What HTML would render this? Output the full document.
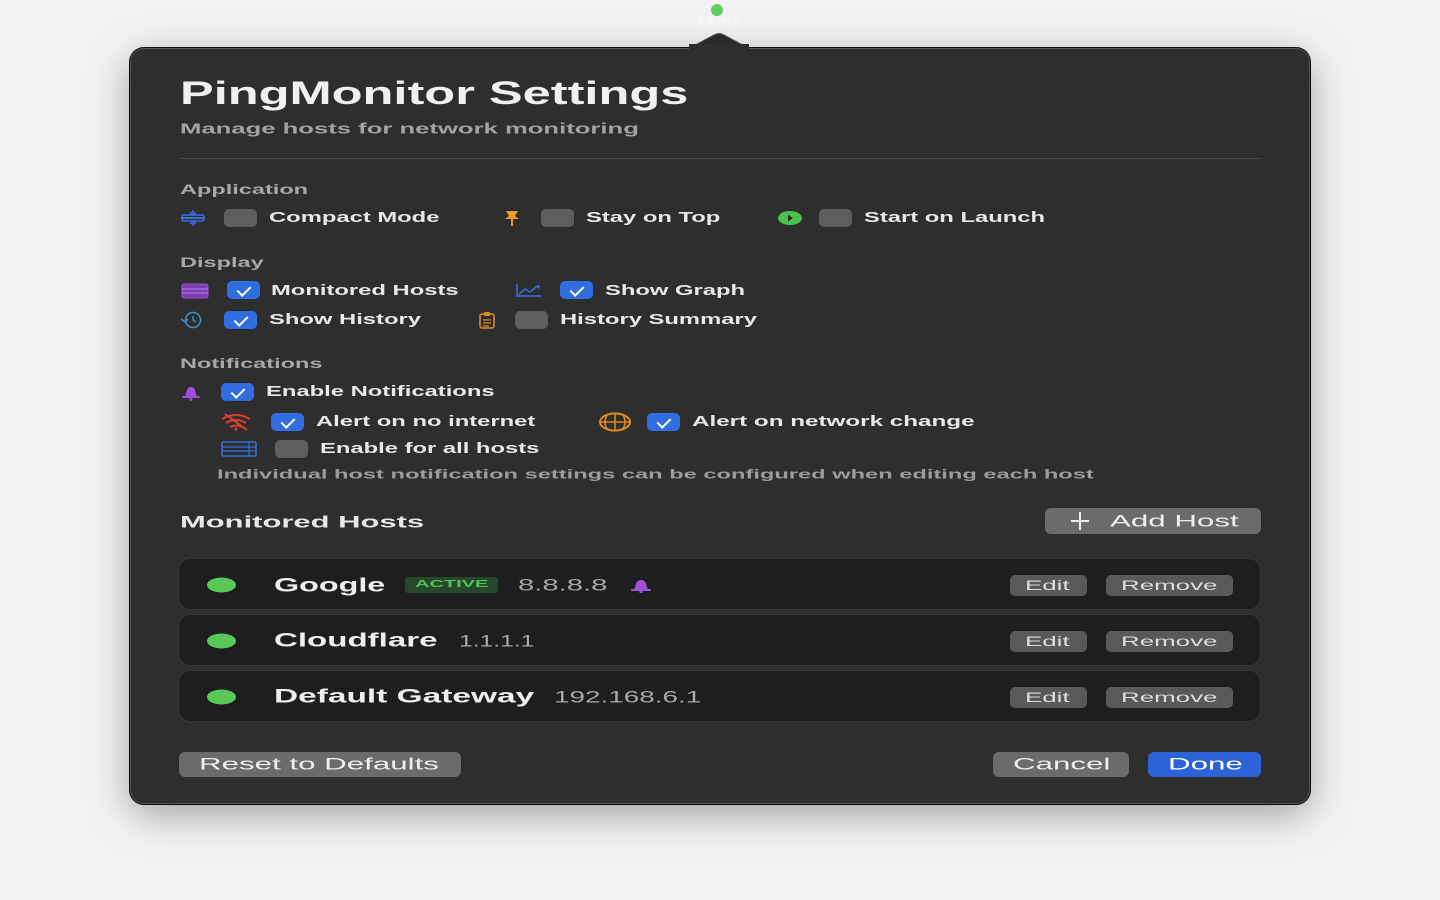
<!DOCTYPE html>
<html><head><meta charset="utf-8"><style>
*{margin:0;padding:0;box-sizing:border-box}
body{width:1440px;height:900px;background:#f3f3f5;position:relative;overflow:hidden;font-family:"Liberation Sans",sans-serif;}
.panel{position:absolute;left:130px;top:48px;width:1180px;height:756px;background:#2e2e2e;border-radius:14px;border:1px solid #555;box-shadow:0 10px 40px rgba(0,0,0,.35),0 0 0 1px #111;}
.t{position:absolute;white-space:nowrap;transform-origin:left center;font-weight:bold;line-height:1;transform:translateY(-50%) scaleX(1.5);}
.l{font-size:14.5px;color:#e8e8e8;transform:translateY(-50%) scaleX(1.64)}
.h{font-size:14px;color:#a8a8a8;transform:translateY(-50%) scaleX(1.68)}
.b{font-size:17px;font-weight:normal;transform:translateY(-50%) scaleX(1.84)}
.e{font-size:14px;color:#ddd;font-weight:normal;transform:translateY(-50%) scaleX(1.85)}
.cb{position:absolute;width:33px;height:18px;border-radius:5px;background:#5e5e5e;transform:translateY(-50%)}
.cb.on{background:#2f6de0}
.cb.on::after{content:"";position:absolute;left:13px;top:2px;width:6px;height:11px;border:solid #fff;border-width:0 2.5px 2.5px 0;transform:rotate(45deg)}
.ic{position:absolute;transform:translate(-50%,-50%)}
.row{position:absolute;left:178px;width:1083px;height:52px;background:#1e1e1e;border-radius:12px;border:1px solid #363636}
.dot{position:absolute;left:207px;width:29px;height:15px;border-radius:50%;background:#57c957;transform:translateY(-50%)}
.btn{position:absolute;border-radius:5px;background:#595959}
</style></head><body>
<div style="position:absolute;left:711px;top:4px;width:12px;height:12px;border-radius:50%;background:#5fd05f"></div>
<div class="t" style="left:696px;top:22px;font-size:11px;color:#fff;opacity:.6;transform:translateY(-50%) scaleX(1.6)">12ms</div>
<svg style="position:absolute;left:688px;top:32px" width="62" height="18"><path d="M0 17 L26 3 Q31 0 36 3 L62 17 Z" fill="#2e2e2e" stroke="#555"/></svg>
<div class="panel"></div>
<svg style="position:absolute;left:689px;top:44px" width="60" height="8"><rect width="60" height="8" fill="#2e2e2e"/></svg>

<div class="t" style="left:180px;top:93px;font-size:32px;color:#f0f0f0;transform:translateY(-50%) scaleX(1.58)">PingMonitor Settings</div>
<div class="t" style="left:180px;top:129px;font-size:15px;color:#a3a3a3;transform:translateY(-50%) scaleX(1.71)">Manage hosts for network monitoring</div>
<div style="position:absolute;left:180px;top:158px;width:1081px;height:1px;background:#4c4c4c"></div>

<div class="t h" style="left:180px;top:189px">Application</div>
<svg class="ic" style="left:193px;top:218px" width="28" height="18"><path d="M2 9H26" stroke="#3a6fe0" stroke-width="2"/><rect x="3" y="6" width="22" height="6" rx="2" fill="none" stroke="#3a6fe0" stroke-width="1.6"/><path d="M14 1v5M11 3l3 3 3-3M14 17v-5M11 15l3-3 3 3" stroke="#3a6fe0" stroke-width="1.5" fill="none"/></svg>
<div class="cb" style="left:224px;top:218px"></div>
<div class="t l" style="left:269px;top:218px">Compact Mode</div>
<svg class="ic" style="left:512px;top:218px" width="20" height="18"><path d="M4 2h12l-3 5 4 3H3l4-3z" fill="#f09a2a"/><path d="M10 10v7" stroke="#f09a2a" stroke-width="2"/></svg>
<div class="cb" style="left:541px;top:218px"></div>
<div class="t l" style="left:586px;top:218px">Stay on Top</div>
<svg class="ic" style="left:790px;top:218px" width="26" height="16"><ellipse cx="13" cy="8" rx="12" ry="7" fill="#4cc24c"/><path d="M11 4.5v7l5-3.5z" fill="#2e2e2e"/></svg>
<div class="cb" style="left:819px;top:218px"></div>
<div class="t l" style="left:864px;top:218px">Start on Launch</div>

<div class="t h" style="left:180px;top:262px">Display</div>
<svg class="ic" style="left:195px;top:291px" width="28" height="16"><rect x="1" y="1" width="26" height="14" rx="2" fill="#7b3fb0" stroke="#9a55d0"/><path d="M1 6H27M1 10H27" stroke="#c07de8"/></svg>
<div class="cb on" style="left:227px;top:290px"></div>
<div class="t l" style="left:271px;top:291px">Monitored Hosts</div>
<svg class="ic" style="left:529px;top:290px" width="28" height="16"><path d="M2 2V14H26" stroke="#3a6fe0" stroke-width="1.5" fill="none"/><path d="M4 12l6-5 5 3 6-5" stroke="#3a6fe0" stroke-width="1.5" fill="none"/><path d="M20 4l5-1-1 4z" fill="#3a6fe0"/></svg>
<div class="cb on" style="left:560px;top:290px"></div>
<div class="t l" style="left:605px;top:291px">Show Graph</div>
<svg class="ic" style="left:192px;top:320px" width="28" height="18"><circle cx="15" cy="9" r="7.5" fill="none" stroke="#3a8fc8" stroke-width="1.6"/><path d="M15 5v4l3 2" stroke="#3a8fc8" stroke-width="1.5" fill="none"/><path d="M3 8l4 3 3-3" stroke="#3a8fc8" stroke-width="1.5" fill="none"/></svg>
<div class="cb on" style="left:224px;top:320px"></div>
<div class="t l" style="left:269px;top:320px">Show History</div>
<svg class="ic" style="left:487px;top:320px" width="18" height="18"><rect x="2" y="3" width="14" height="14" rx="2" fill="none" stroke="#d98a25" stroke-width="1.6"/><rect x="6" y="1" width="6" height="4" rx="1" fill="#d98a25"/><path d="M5 9h8M5 12h8M5 15h6" stroke="#d98a25" stroke-width="1.3"/></svg>
<div class="cb" style="left:515px;top:320px"></div>
<div class="t l" style="left:560px;top:320px">History Summary</div>

<div class="t h" style="left:180px;top:363px">Notifications</div>
<svg class="ic" style="left:191px;top:392px" width="22" height="18"><path d="M5 13c2-2 1-9 6-9s4 7 6 9z" fill="#a050d8"/><rect x="2" y="13" width="18" height="2" rx="1" fill="#a050d8"/><circle cx="11" cy="16.5" r="1.5" fill="#a050d8"/></svg>
<div class="cb on" style="left:221px;top:392px"></div>
<div class="t l" style="left:266px;top:392px">Enable Notifications</div>
<svg class="ic" style="left:236px;top:422px" width="34" height="18"><path d="M3 6q14-8 28 0M7 10q10-6 20 0M11 14q6-3 12 0" stroke="#d84030" stroke-width="2" fill="none"/><path d="M6 1l22 16" stroke="#d84030" stroke-width="2"/><circle cx="17" cy="16" r="1.5" fill="#d84030"/></svg>
<div class="cb on" style="left:271px;top:422px"></div>
<div class="t l" style="left:316px;top:422px">Alert on no internet</div>
<svg class="ic" style="left:615px;top:422px" width="34" height="20"><ellipse cx="17" cy="10" rx="15" ry="8.5" fill="none" stroke="#e08a20" stroke-width="2"/><path d="M2 10h30M17 2v16M9 3q-4 7 0 14M25 3q4 7 0 14" stroke="#e08a20" stroke-width="1.5" fill="none"/></svg>
<div class="cb on" style="left:647px;top:422px"></div>
<div class="t l" style="left:692px;top:422px;transform:translateY(-50%) scaleX(1.67)">Alert on network change</div>
<svg class="ic" style="left:239px;top:449px" width="36" height="16"><rect x="1" y="1" width="34" height="14" rx="1.5" fill="none" stroke="#2f6de0" stroke-width="1.6"/><path d="M1 6H35M1 10H35M28 1v14" stroke="#2f6de0" stroke-width="1.3"/></svg>
<div class="cb" style="left:275px;top:449px"></div>
<div class="t l" style="left:320px;top:449px">Enable for all hosts</div>
<div class="t" style="left:217px;top:474px;font-size:13px;color:#9c9c9c;transform:translateY(-50%) scaleX(1.82)">Individual host notification settings can be configured when editing each host</div>

<div class="t" style="left:180px;top:522px;font-size:17px;color:#e8e8e8;transform:translateY(-50%) scaleX(1.82)">Monitored Hosts</div>
<div class="btn" style="left:1045px;top:508px;width:216px;height:26px;background:#6b6b6b;border-radius:6px"></div>
<svg class="ic" style="left:1080px;top:521px" width="22" height="22"><path d="M11 2v18M2 11h18" stroke="#eee" stroke-width="2"/></svg>
<div class="t b" style="left:1110px;top:521px;color:#eee">Add Host</div>

<div class="row" style="top:558px"></div>
<div class="row" style="top:614px"></div>
<div class="row" style="top:670px"></div>

<div class="dot" style="top:585px"></div>
<div class="t" style="left:274px;top:586px;font-size:19px;color:#eee;transform:translateY(-50%) scaleX(1.7)">Google</div>
<div style="position:absolute;left:405px;top:577px;width:93px;height:16px;background:#27472b;border-radius:3px"></div>
<div class="t" style="left:415px;top:585px;font-size:10px;color:#4cc35a;transform:translateY(-50%) scaleX(2.0)">ACTIVE</div>
<div class="t" style="left:518px;top:585px;font-size:17px;color:#a8a8a8;font-weight:normal;transform:translateY(-50%) scaleX(1.72)">8.8.8.8</div>
<svg class="ic" style="left:641px;top:585px" width="22" height="16"><path d="M4 12c2-2 1-9 7-9s5 7 7 9z" fill="#a050d8"/><rect x="1" y="12" width="20" height="2" rx="1" fill="#a050d8"/><circle cx="11" cy="15" r="1.5" fill="#a050d8"/></svg>

<div class="dot" style="top:641px"></div>
<div class="t" style="left:274px;top:641px;font-size:19px;color:#eee;transform:translateY(-50%) scaleX(1.74)">Cloudflare</div>
<div class="t" style="left:459px;top:641px;font-size:17px;color:#a8a8a8;font-weight:normal;transform:translateY(-50%) scaleX(1.45)">1.1.1.1</div>

<div class="dot" style="top:697px"></div>
<div class="t" style="left:274px;top:697px;font-size:19px;color:#eee;transform:translateY(-50%) scaleX(1.76)">Default Gateway</div>
<div class="t" style="left:554px;top:697px;font-size:17px;color:#a8a8a8;font-weight:normal;transform:translateY(-50%) scaleX(1.64)">192.168.6.1</div>

<div class="btn" style="left:1010px;top:575px;width:77px;height:21px"></div>
<div class="t e" style="left:1025px;top:585px">Edit</div>
<div class="btn" style="left:1106px;top:575px;width:127px;height:21px"></div>
<div class="t e" style="left:1121px;top:585px">Remove</div>
<div class="btn" style="left:1010px;top:631px;width:77px;height:21px"></div>
<div class="t e" style="left:1025px;top:641px">Edit</div>
<div class="btn" style="left:1106px;top:631px;width:127px;height:21px"></div>
<div class="t e" style="left:1121px;top:641px">Remove</div>
<div class="btn" style="left:1010px;top:687px;width:77px;height:21px"></div>
<div class="t e" style="left:1025px;top:697px">Edit</div>
<div class="btn" style="left:1106px;top:687px;width:127px;height:21px"></div>
<div class="t e" style="left:1121px;top:697px">Remove</div>

<div class="btn" style="left:179px;top:752px;width:282px;height:25px;background:#6b6b6b;border-radius:6px"></div>
<div class="t b" style="left:199px;top:764px;color:#eee">Reset to Defaults</div>
<div class="btn" style="left:993px;top:752px;width:136px;height:25px;background:#6b6b6b;border-radius:6px"></div>
<div class="t b" style="left:1013px;top:764px;color:#eee">Cancel</div>
<div class="btn" style="left:1148px;top:752px;width:113px;height:25px;background:#2d63d8;border-radius:6px"></div>
<div class="t b" style="left:1168px;top:764px;color:#fff">Done</div>
</body></html>
